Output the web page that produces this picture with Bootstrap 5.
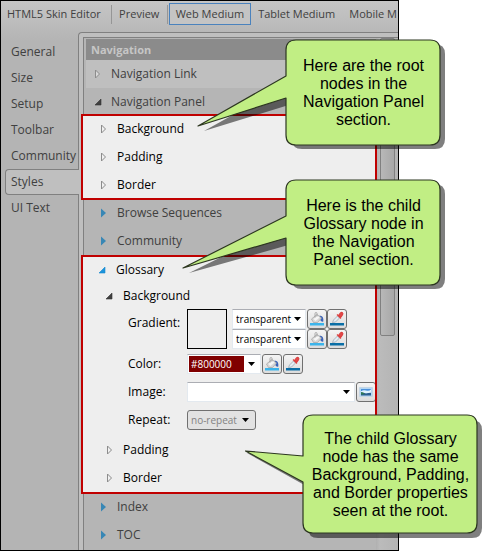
<!DOCTYPE html>
<html lang="en">
<head>
<meta charset="utf-8">
<meta name="viewport" content="width=device-width, initial-scale=1">
<title>HTML5 Skin Editor</title>
<link href="https://cdn.jsdelivr.net/npm/bootstrap@5.3.0/dist/css/bootstrap.min.css" rel="stylesheet">
<style>
body { font-family: "Open Sans", "Noto Sans", sans-serif; font-size: 12px; line-height: 16px; color: #404040; background: #fff; }
.stage { padding-right: 93px; min-height: 100vh; }
.editor { min-height: 100vh; border: 1px solid #000; background: linear-gradient(#c6c6c6, #b4b4b4 40px); }
.topbar { height: 26px; font-size: 11px; }
.topbar a { color: #404040; text-decoration: none; padding: 0 6px; line-height: 20px; border: 1px solid transparent; white-space: nowrap; }
.topbar a:first-child { padding-left: 5px; padding-right: 8px; }
.topbar a.current { border-color: #4a82bd; background: #c4c4c4; }
.topbar .divide { width: 1px; height: 19px; background: #969696; margin: 0 1px; }
.side { width: 78px; padding-top: 6px; margin-right: -1px; z-index: 1; }
.side a { color: #404040; text-decoration: none; height: 26px; line-height: 24px; padding-left: 5px; margin-left: 4px; border: 1px solid transparent; border-right: 0; }
.side a.current { background: #bfbfbf; border-color: #808080; border-radius: 4px 0 0 4px; }
.frame { border: 1px solid #808080; border-width: 1px 0 0 1px; border-top-left-radius: 4px; padding: 4px 0 0 4px; background: #bfbfbf; margin-top: 5px; min-width: 0; }
.inner { border: 1px solid #808080; border-width: 1px 0 0 1px; background: #b5b5b5; }
.tree { padding: 1px 0 0 2px; min-width: 0; }
.heading { background: #8b8b8b; color: #c6c6c6; font-weight: 700; font-size: 11px; height: 21px; line-height: 21px; padding-left: 5px; margin: 0; }
.node { display: flex; align-items: center; width: 100%; height: 28px; border: 0; background: transparent; padding: 0 0 0 14px; color: #404040; text-align: left; white-space: nowrap; }
.node svg { width: 8px; height: 10px; margin-right: 9px; flex: none; }
.node.light { background: #bfbfbf; padding-left: 8px; }
.node.section { height: 27px; padding-left: 8px; }
.lit { background: #eee; outline: 2px solid #c00000; outline-offset: -1px; margin-left: -4px; position: relative; }
.lit.deep { margin-top: 1px; padding-bottom: 1px; }
.lit .node { padding-left: 18px; color: #000; }
.lit .opened { height: 27px; padding-left: 16px; }
.lit .opened svg { margin-right: 10px; }
.lit .level2 { padding-left: 24px; }
.lit .opened.level2 { height: 26px; padding-left: 23px; }
.fields { padding: 0 0 6px 46px; color: #000; }
.fields .caption { width: 59px; flex: none; padding-left: 0; }
.line { height: 20px; display: flex; align-items: center; margin-bottom: 8px; }
.gradient-line { height: 41px; margin-bottom: 4px; display: flex; }
.gradient-line .caption { padding-top: 6px; }
.swatch { width: 40px; height: 40px; border: 1px solid #000; margin-right: 5px; flex: none; }
.pick { appearance: none; height: 20px; border: 1px solid #e3e9ef; border-top-color: #abadb3; border-radius: 0; padding: 0 12px 0 3px; font-size: 10px; line-height: 16px; color: #000; background: #fff url("data:image/svg+xml,%3Csvg xmlns='http://www.w3.org/2000/svg' width='8' height='5'%3E%3Cpath d='M0 0h7L3.500 4z'/%3E%3C/svg%3E") no-repeat right 3px center; }
.colour { width: 74px; }
.wide { width: 168px; }
.repeat { width: 69px; border: 1px solid #707070; border-radius: 3px; color: #838383; background-color: #e2e2e2; background-position: right 5px center; }
.hex { width: 74px; height: 20px; background: #fff; border: 1px solid #e3e9ef; border-top-color: #abadb3; padding: 1px; }
.hex input { width: 55px; height: 16px; border: 0; padding: 0 2px; background: #800000; color: #fff; font-size: 10px; line-height: 16px; }
.hex button { flex: 1; border: 0; background: transparent; padding: 0; line-height: 0; }
.tool { width: 20px; height: 20px; padding: 0; border: 1px solid #707070; border-radius: 3px; background: linear-gradient(#f4f4f4, #dcdcdc); line-height: 0; flex: none; margin-left: 1px; overflow: hidden; }
.tool + .tool { margin-left: 0; }
.spaced .tool + .tool { margin-left: 1px; }
.tool svg { width: 16px; height: 16px; }
.scroller { width: 22px; flex: none; padding: 0 3px 0 4px; background: linear-gradient(90deg, #b0b0b0, #bbb 4px, #b4b4b4); }
.thumb { height: 298px; border: 1px solid #808080; border-radius: 2px; background: linear-gradient(90deg, #b8b8b8, #a8a8a8); }
.callout { position: absolute; display: flex; align-items: center; justify-content: center; text-align: center; font: 16px/18px "Liberation Sans", Arial, sans-serif; color: #000; z-index: 3; }
.callout svg { position: absolute; right: -6px; top: 0; z-index: -1; overflow: visible; }
.callout p { margin: 0; }
.c-root { left: 286px; top: 39px; width: 155px; height: 107px; }
.c-child { left: 286px; top: 179px; width: 155px; height: 107px; }
.c-same { left: 303px; top: 415px; width: 175px; height: 119px; }
.bubble { fill: #c1ee84; stroke: #2c3620; stroke-width: 1.200; stroke-linejoin: round; }
.shade { fill: #000; opacity: .5; }
</style>
<script src="https://cdn.jsdelivr.net/npm/bootstrap@5.3.0/dist/js/bootstrap.bundle.min.js"></script>
</head>
<body>
<svg class="d-none" aria-hidden="true">
  <symbol id="closed" viewBox="0 0 8 10"><path d="M1.500 1v8L5.500 5z" fill="#f4f4f4" fill-opacity=".5" stroke="#8c8c8c"/></symbol>
  <symbol id="blue" viewBox="0 0 8 10"><path d="M1 0.500v9L6 5z" fill="#3887b5"/></symbol>
  <symbol id="open" viewBox="0 0 8 10"><path d="M7 2v6H1z" fill="#404040" stroke="#333" stroke-width=".6"/></symbol>
  <symbol id="openblue" viewBox="0 0 8 10"><path d="M7 2v6H1z" fill="#1c94dc" stroke="#1588cc" stroke-width=".6"/></symbol>
  <symbol id="bucket" viewBox="0 0 16 16">
    <path d="M10.500 4.500q4.500 0 3.800 6-2 .5-2.800-1 .5-2.500-1-5z" fill="#3b63b8"/>
    <path d="M2.500 8L8 3.500l4.500 3.500-4 4.500H4.500z" fill="#d8d8d8" stroke="#a0a0a0" stroke-width=".7"/>
    <path d="M4.500 8l4-3.200 2 1.700-4 3.500z" fill="#f6f6f6"/>
    <path d="M6 6.500V2.500Q6 1.500 7 1.500T8 2.500V5.500" fill="none" stroke="#9a9a9a" stroke-width=".8"/>
    <path d="M1 12h14v2.500H1z" fill="#3cb4ea"/>
  </symbol>
  <symbol id="dropper" viewBox="0 0 16 16">
    <path d="M3.500 11.500l1-2.500 4-4 2 2-4 4z" fill="#e4edf4" stroke="#9aa8b4" stroke-width=".8"/>
    <path d="M8 3.500l4 4M9.500 4.500l2-2.500q1.200-1 2-.1t-.1 2L11.500 6.500z" fill="#e04a4a" stroke="#dc4040" stroke-width="1.200"/>
    <path d="M1 12h14v2.500H1z" fill="#0a6ea6"/>
  </symbol>
  <symbol id="photo" viewBox="0 0 16 16">
    <path d="M1.500 3.500h13v9h-13z" fill="#b4d6f2" stroke="#c4d6e6"/>
    <path d="M3 5h10v2H3z" fill="#4a90dc"/>
    <path d="M3 7.500q2-2 5-1t5-1v3.500H3z" fill="#e0f2fd"/>
    <path d="M3 8.500q3 0 5 1 2-.8 5-.8V11.500H3z" fill="#2d5f91"/>
    <path d="M3 8q2 0 4 2-2 .6-4 .4z" fill="#2f7a55"/>
  </symbol>
</svg>
<div class="stage position-relative">
  <div class="editor d-flex flex-column overflow-hidden">
    <nav class="topbar d-flex align-items-center">
      <a href="#">HTML5 Skin Editor</a><span class="divide"></span>
      <a href="#">Preview</a><span class="divide"></span>
      <a href="#" class="current">Web Medium</a>
      <a href="#">Tablet Medium</a>
      <a href="#" class="pe-0">Mobile M</a>
    </nav>
    <div class="d-flex flex-grow-1">
      <nav class="side d-flex flex-column flex-shrink-0 position-relative pt-2 mt-1">
        <a href="#">General</a><a href="#">Size</a><a href="#">Setup</a><a href="#">Toolbar</a><a href="#">Community</a><a href="#" class="current">Styles</a><a href="#">UI Text</a>
      </nav>
      <main class="frame d-flex flex-grow-1">
        <div class="inner d-flex flex-grow-1">
          <div class="tree flex-grow-1">
            <h1 class="heading">Navigation</h1>
            <button class="node light"><svg><use href="#closed"/></svg>Navigation Link</button>
            <button class="node section"><svg><use href="#open"/></svg>Navigation Panel</button>
            <div class="lit">
              <button class="node"><svg><use href="#closed"/></svg>Background</button>
              <button class="node"><svg><use href="#closed"/></svg>Padding</button>
              <button class="node"><svg><use href="#closed"/></svg>Border</button>
            </div>
            <button class="node"><svg><use href="#blue"/></svg>Browse Sequences</button>
            <button class="node"><svg><use href="#blue"/></svg>Community</button>
            <div class="lit deep">
              <button class="node opened"><svg><use href="#openblue"/></svg>Glossary</button>
              <button class="node opened level2"><svg><use href="#open"/></svg>Background</button>
              <div class="fields">
                <div class="gradient-line">
                  <label class="caption" for="g1">Gradient:</label>
                  <span class="swatch"></span>
                  <div>
                    <div class="d-flex"><select id="g1" class="pick colour"><option>transparent</option></select><button class="tool" aria-label="Fill"><svg><use href="#bucket"/></svg></button><button class="tool" aria-label="Pick"><svg><use href="#dropper"/></svg></button></div>
                    <div class="d-flex"><select aria-label="Gradient end" class="pick colour"><option>transparent</option></select><button class="tool" aria-label="Fill"><svg><use href="#bucket"/></svg></button><button class="tool" aria-label="Pick"><svg><use href="#dropper"/></svg></button></div>
                  </div>
                </div>
                <div class="line spaced">
                  <label class="caption" for="col">Color:</label>
                  <div class="hex d-flex"><input id="col" type="text" value="#800000"><button aria-label="Colors"><svg width="8" height="5"><path d="M0 0h7L3.500 4z"/></svg></button></div>
                  <button class="tool" aria-label="Fill"><svg><use href="#bucket"/></svg></button><button class="tool" aria-label="Pick"><svg><use href="#dropper"/></svg></button>
                </div>
                <div class="line">
                  <label class="caption" for="img">Image:</label>
                  <select id="img" class="pick wide flex-grow-1"><option></option></select><button class="tool" aria-label="Browse"><svg><use href="#photo"/></svg></button>
                </div>
                <div class="line mb-0">
                  <label class="caption" for="rep">Repeat:</label>
                  <select id="rep" class="pick repeat"><option>no-repeat</option></select>
                </div>
              </div>
              <button class="node level2"><svg><use href="#closed"/></svg>Padding</button>
              <button class="node level2"><svg><use href="#closed"/></svg>Border</button>
            </div>
            <button class="node"><svg><use href="#blue"/></svg>Index</button>
            <button class="node"><svg><use href="#blue"/></svg>TOC</button>
          </div>
          <div class="scroller"><div class="thumb"></div></div>
        </div>
      </main>
    </div>
  </div>

  <div class="callout c-root">
    <svg width="249" height="113" viewBox="198 39 249 113"><path class="shade" d="M204 131L292 82V54q0-10 10-10H435q10 0 10 10V139q0 10-10 10H302q-10 0-10-10V104z"/><path class="bubble" d="M198 126L286 76V50q0-10 10-10H430q10 0 10 10V135q0 10-10 10H296q-10 0-10-10V98z"/></svg>
    <p>Here are the root<br>nodes in the<br>Navigation Panel<br>section.</p>
  </div>
  <div class="callout c-child">
    <svg width="264" height="113" viewBox="183 179 264 113"><path class="shade" d="M189 273L292 222V194q0-10 10-10H435q10 0 10 10V279q0 10-10 10H302q-10 0-10-10V244z"/><path class="bubble" d="M183 268L286 216V190q0-10 10-10H430q10 0 10 10V275q0 10-10 10H296q-10 0-10-10V238z"/></svg>
    <p>Here is the child<br>Glossary node in<br>the Navigation<br>Panel section.</p>
  </div>
  <div class="callout c-same">
    <svg width="239" height="125" viewBox="245 415 239 125"><path class="shade" d="M247 453L308 460V430q0-10 10-10H472q10 0 10 10V528q0 10-10 10H318q-10 0-10-10V487z"/><path class="bubble" d="M245.500 451L303 456V425q0-10 10-10H467q10 0 10 10V523q0 10-10 10H313q-10 0-10-10V482z"/></svg>
    <p>The child Glossary<br>node has the same<br>Background, Padding,<br>and Border properties<br>seen at the root.</p>
  </div>
</div>
</body>
</html>
